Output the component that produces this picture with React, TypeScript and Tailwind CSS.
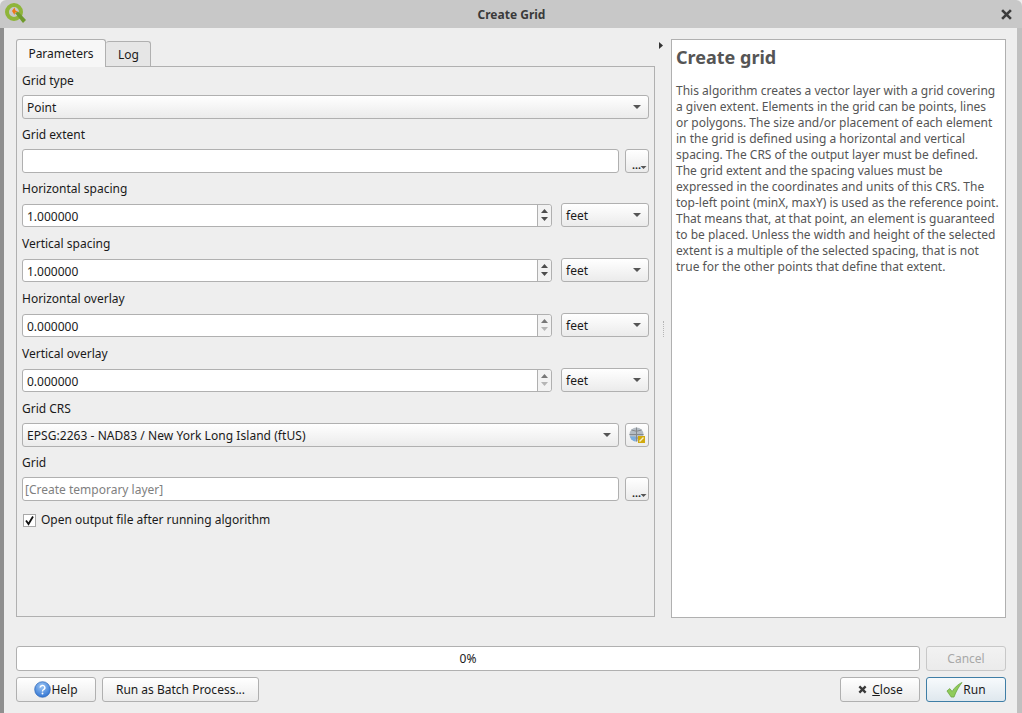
import { ReactNode } from 'react';

function Caret({ className = '' }: { className?: string }) {
  return (
    <svg width="8" height="4" viewBox="0 0 8 4" className={className}>
      <path d="M0 0h8L4 4z" fill="#555555" />
    </svg>
  );
}

function Combo({ text, className = '' }: { text: string; className?: string }) {
  return (
    <div className={`flex h-6 items-center justify-between rounded-[3px] border border-[#b0b0b0] bg-gradient-to-b from-white to-[#ebebeb] pl-1 pr-[7px] text-[#1a1a1a] ${className}`}>
      <span className="pt-[2px]">{text}</span>
      <Caret />
    </div>
  );
}

function Spin({ value, dimDown }: { value: string; dimDown?: boolean }) {
  return (
    <div className="flex h-[23px] w-[530px] rounded-[3px] border border-[#b0b0b0] bg-white">
      <div className="flex flex-1 items-center pl-1 pt-[4px] text-[#1a1a1a]">{value}</div>
      <div className="flex w-[14px] flex-col items-center justify-center gap-[4px] rounded-r-[3px] border-l border-[#b0b0b0] bg-[#f2f2f2]">
        <svg width="7" height="4" viewBox="0 0 7 4">
          <path d="M3.500 0L7 4H0z" fill={dimDown ? '#777777' : '#4d4d4d'} />
        </svg>
        <svg width="7" height="4" viewBox="0 0 7 4">
          <path d="M0 0h7L3.500 4z" fill={dimDown ? '#b5b5b5' : '#4d4d4d'} />
        </svg>
      </div>
    </div>
  );
}

function SpinRow({ label, value, dimDown, className = 'mt-[7px]' }: { label: string; value: string; dimDown?: boolean; className?: string }) {
  return (
    <div className={className}>
      <div className="h-[24px] leading-[20px]">{label}</div>
      <div className="flex items-center justify-between">
        <Spin value={value} dimDown={dimDown} />
        <Combo text="feet" className="w-[88px]" />
      </div>
    </div>
  );
}

function SmallBtn({ children }: { children: ReactNode }) {
  return (
    <div className="relative flex h-6 w-6 shrink-0 items-center justify-center rounded-[3px] border border-[#b0b0b0] bg-gradient-to-b from-white to-[#ebebeb]">
      {children}
    </div>
  );
}

function Dots() {
  return (
    <SmallBtn>
      <span className="absolute left-[6px] top-[9px] text-[11px] font-semibold leading-[11px] text-[#222]">...</span>
      <Caret className="absolute bottom-[3px] right-[1px] h-[3px] w-[7px]" />
    </SmallBtn>
  );
}

function QgisLogo() {
  return (
    <svg width="23" height="23" viewBox="0 0 23 23">
      <circle cx="10" cy="10" r="7" fill="none" stroke="#8fb53a" strokeWidth="4" />
      <path d="M11 11l3-1.500 8 8.500-3 3z" fill="#6f9a2c" />
      <path d="M8 9l2.500-3.500 1 3L14 10l-3 .5-.5 2.500z" fill="#ee7913" />
    </svg>
  );
}

function CrsIcon() {
  return (
    <svg width="16" height="16" viewBox="0 0 16 16">
      <circle cx="7.500" cy="7.500" r="7" fill="#b4bcc4" />
      <path d="M.5 7.500h14M7.500.5v14M2.500 3q5 2.500 10 0M2.500 12q5-2.500 10 0" stroke="#85898d" strokeWidth="1" fill="none" />
      <path d="M1 9.500a7 7 0 0 0 5.500 5V9.500z" fill="#7aaee0" />
      <rect x="9" y="9" width="7" height="7" fill="#d1a90e" />
      <path d="M10.500 14.500l4-4" stroke="#f6efc6" strokeWidth="1.500" />
    </svg>
  );
}

function HelpIcon() {
  return (
    <svg width="17" height="17" viewBox="0 0 18 18">
      <defs>
        <radialGradient id="helpBall" cx="45%" cy="30%" r="75%">
          <stop offset="0%" stopColor="#9cc6f5" />
          <stop offset="100%" stopColor="#2a6fd0" />
        </radialGradient>
      </defs>
      <circle cx="9" cy="9" r="8.300" fill="url(#helpBall)" stroke="#2e66b5" strokeWidth="0.7" />
      <path d="M6.500 7a2.500 2.300 0 1 1 3.700 2c-.9.500-1.200 1-1.200 2" fill="none" stroke="#fff" strokeWidth="1.500" />
      <circle cx="9" cy="13.300" r="1" fill="#fff" />
    </svg>
  );
}

function RunIcon() {
  return (
    <svg width="17" height="18" viewBox="0 0 18 18">
      <path d="M1 10l3-2.500 2.500 3C9 6.500 12.500 3 17 1c-3 4-6.500 9.500-8.500 15.500H5.500z" fill="#8fcb5a" stroke="#5f9c35" strokeWidth="0.7" />
    </svg>
  );
}

function FooterBtn({ children, className = '' }: { children: ReactNode; className?: string }) {
  return (
    <div className={`flex h-[25px] items-center justify-center rounded-[3px] border bg-gradient-to-b ${className}`}>
      {children}
    </div>
  );
}

export default function App() {
  return (
    <div className="flex h-[713px] w-[1022px] flex-col overflow-hidden bg-[#eeeeee] text-[12px] text-[#1a1a1a] [font-family:'Noto_Sans',sans-serif]">
      {/* Title bar */}
      <div className="relative flex h-[28px] shrink-0 items-center justify-center rounded-t-[6px] bg-[#c8c8c8] pl-px pt-px">
        <div className="absolute left-[4px] top-[2px]">
          <QgisLogo />
        </div>
        <span className="font-bold text-[#3a3a3a]">Create Grid</span>
        <svg width="11" height="11" viewBox="0 0 10 10" className="absolute right-[10px] top-[9px]">
          <path d="M1 1l8 8M9 1l-8 8" stroke="#3a3a3a" strokeWidth="2.400" />
        </svg>
      </div>

      <div className="flex flex-1 flex-col border-l-[4px] border-r-[5px] border-l-[#8f8f8f] border-r-[#c0c0c0] pl-3 pr-[11px]">
        <div className="mt-[11px] flex h-[579px]">
          {/* Left: parameters */}
          <div className="flex w-[639px] flex-col">
            <div className="flex h-[28px] items-end">
              <div className="relative z-10 flex h-[28px] w-[90px] items-center justify-center rounded-t-[3px] border border-b-0 border-[#b0b0b0] bg-[#f7f7f7]">
                Parameters
              </div>
              <div className="flex h-[26px] w-[45px] items-center justify-center rounded-t-[3px] border border-b-0 border-l-0 border-[#b0b0b0] bg-[#e6e6e6] pl-px">
                Log
              </div>
            </div>
            <div className="-mt-px flex h-[551px] flex-col border border-[#b0b0b0] px-[5px] pt-[5px]">
              <div className="h-[23px] leading-[18px]">Grid type</div>
              <Combo text="Point" />

              <div className="mt-[6px] h-[24px] leading-[20px]">Grid extent</div>
              <div className="flex items-center justify-between">
                <div className="h-6 w-[597px] rounded-[3px] border border-[#b0b0b0] bg-white" />
                <Dots />
              </div>

              <SpinRow label="Horizontal spacing" value="1.000000" className="mt-[6px]" />
              <SpinRow label="Vertical spacing" value="1.000000" />
              <SpinRow label="Horizontal overlay" value="0.000000" dimDown />
              <SpinRow label="Vertical overlay" value="0.000000" dimDown />

              <div className="mt-[7px] h-[24px] leading-[20px]">Grid CRS</div>
              <div className="flex items-center justify-between">
                <Combo text="EPSG:2263 - NAD83 / New York Long Island (ftUS)" className="w-[597px] tracking-[0.05px]" />
                <SmallBtn>
                  <CrsIcon />
                </SmallBtn>
              </div>

              <div className="mt-[6px] h-[24px] leading-[20px]">Grid</div>
              <div className="flex items-center justify-between">
                <div className="flex h-6 w-[597px] items-center rounded-[3px] border border-[#b0b0b0] bg-white pl-[2px] pt-[2px] text-[#7f7f7f]">
                  [Create temporary layer]
                </div>
                <Dots />
              </div>

              <div className="ml-px mt-[10px] flex items-center gap-[5px]">
                <div className="flex h-[13px] w-[13px] items-center justify-center border border-[#a8a8a8] bg-white">
                  <svg width="11" height="11" viewBox="0 0 11 11">
                    <path d="M2 5.500l2.500 3.500L9 1.500" fill="none" stroke="#111" strokeWidth="1.800" />
                  </svg>
                </div>
                <span>Open output file after running algorithm</span>
              </div>
            </div>
          </div>

          {/* Collapsible splitter */}
          <div className="relative w-[16px] shrink-0">
            <svg width="4" height="7" viewBox="0 0 4 7" className="absolute left-[4px] top-[3px]">
              <path d="M0 0l4 3.500L0 7z" fill="#333" />
            </svg>
            <div className="absolute left-[8px] top-[282px] h-[16px] border-l border-dotted border-[#b5b5b5]" />
          </div>

          {/* Right: help text */}
          <div className="w-[335px] border border-[#b0b0b0] bg-white px-[4px] pt-[5px]">
            <h2 className="text-[18px] font-bold leading-[24px] text-[#555555]">Create grid</h2>
            <p className="mt-[14px] whitespace-pre leading-[16px] text-[#555555]">
              {`This algorithm creates a vector layer with a grid covering
a given extent. Elements in the grid can be points, lines
or polygons. The size and/or placement of each element
in the grid is defined using a horizontal and vertical
spacing. The CRS of the output layer must be defined.
The grid extent and the spacing values must be
expressed in the coordinates and units of this CRS. The
top-left point (minX, maxY) is used as the reference point.
That means that, at that point, an element is guaranteed
to be placed. Unless the width and height of the selected
extent is a multiple of the selected spacing, that is not
true for the other points that define that extent.`}
            </p>
          </div>
        </div>

        {/* Progress */}
        <div className="mt-[28px] flex items-center gap-[6px]">
          <div className="flex h-[25px] w-[904px] items-center justify-center rounded-[3px] border border-[#b0b0b0] bg-white">
            0%
          </div>
          <FooterBtn className="w-[80px] border-[#c8c8c8] from-[#f2f2f2] to-[#ebebeb] text-[#a8a8a8]">Cancel</FooterBtn>
        </div>

        {/* Buttons */}
        <div className="mt-[6px] flex items-center">
          <FooterBtn className="w-[80px] border-[#b0b0b0] from-white to-[#ebebeb]">
            <HelpIcon />
            <span>Help</span>
          </FooterBtn>
          <FooterBtn className="ml-[6px] w-[157px] border-[#b0b0b0] from-white to-[#ebebeb]">Run as Batch Process...</FooterBtn>
          <FooterBtn className="ml-auto w-[80px] gap-[5px] border-[#b0b0b0] from-white to-[#ebebeb] pl-px">
            <svg width="9" height="9" viewBox="0 0 10 10">
              <path d="M1.500 1.500l7 7M8.500 1.500l-7 7" stroke="#3a3a3a" strokeWidth="2.600" />
            </svg>
            <span>
              <span className="underline">C</span>lose
            </span>
          </FooterBtn>
          <FooterBtn className="ml-[6px] w-[80px] border-[#3f7ea6] from-[#f7fafc] to-[#dfe8ee]">
            <RunIcon />
            <span>Run</span>
          </FooterBtn>
        </div>
      </div>
    </div>
  );
}
